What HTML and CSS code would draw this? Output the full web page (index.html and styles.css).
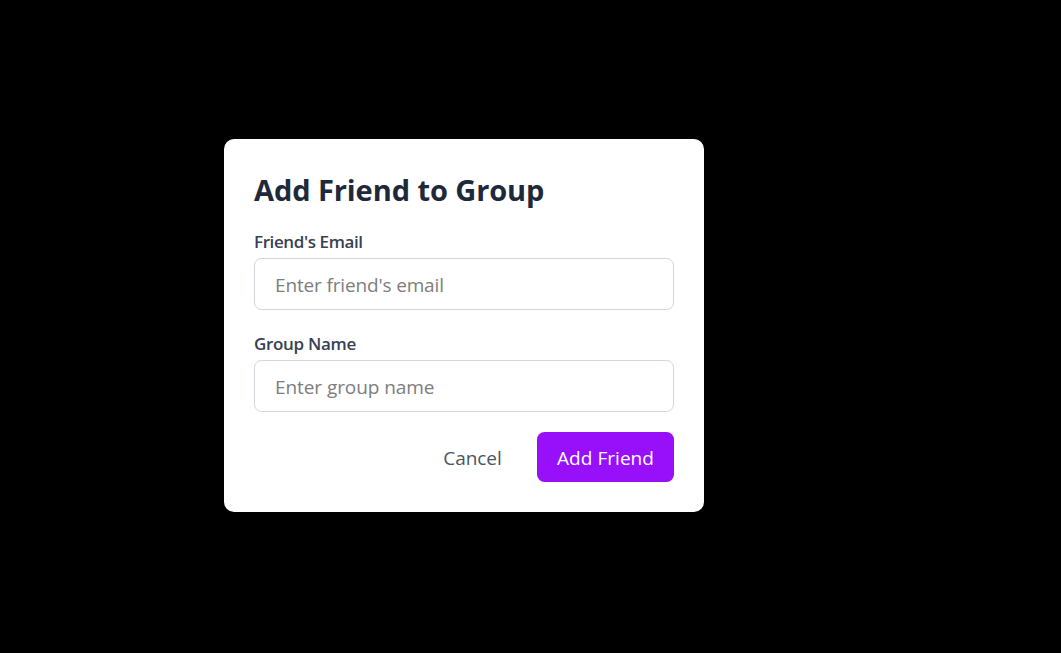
FILE: index.html
```html
<!DOCTYPE html>
<html lang="en">
<head>
<meta charset="utf-8">
<title>Add Friend to Group</title>
<link rel="stylesheet" href="styles.css">
</head>
<body>
<main class="overlay">
<form class="modal">
<h2 class="title">Add Friend to Group</h2>
<div class="field field-email">
<label class="label label-email" for="email">Friend's Email</label>
<input class="input input-email" id="email" type="text" placeholder="Enter friend's email">
</div>
<div class="field">
<label class="label" for="group">Group Name</label>
<input class="input" id="group" type="text" placeholder="Enter group name">
</div>
<div class="actions">
<button class="button cancel" type="button">Cancel</button>
<button class="button submit" type="button">Add Friend</button>
</div>
</form>
</main>
</body>
</html>
```
FILE: styles.css
```css
* { box-sizing: border-box; }
body { margin: 0; background: #000; font-family: "Open Sans", "Noto Sans", sans-serif; }
.overlay { display: flex; height: 653px; padding: 139px 0 0 224px; align-items: flex-start; overflow: hidden; }
.modal { width: 480px; height: 373px; padding: 30px; background: #fff; border-radius: 10px; }
.title { margin: 0; height: 60px; padding-top: 1px; font-size: 29px; line-height: 40px; letter-spacing: -0.08px; font-weight: 700; color: #1e2939; white-space: nowrap; }
.field { margin-bottom: 20px; }
.field-email { margin-bottom: 21px; }
.label { display: block; height: 25px; margin-bottom: 4px; font-size: 17px; line-height: 25px; letter-spacing: -0.31px; font-weight: 600; color: #364153; white-space: nowrap; }
.label-email { letter-spacing: -0.39px; }
.input { display: block; width: 420px; height: 52px; padding: 1px 20px 0; border: 1px solid #d1d5dc; border-radius: 7.5px; background: #fff; font: 400 19px/30px "Open Sans", "Noto Sans", sans-serif; letter-spacing: -0.07px; outline: none; }
.input-email { letter-spacing: -0.15px; }
.input::placeholder { color: #7d7d7d; opacity: 1; }
.actions { display: flex; justify-content: flex-end; gap: 15px; }
.button { height: 50px; padding: 2px 0 0; border: 0; border-radius: 7.5px; font: 400 19px/30px "Open Sans", "Noto Sans", sans-serif; white-space: nowrap; }
.cancel { width: 99px; background: transparent; color: #4a5565; letter-spacing: -0.08px; }
.submit { width: 137px; background: #980ffa; color: #fff; letter-spacing: 0.05px; }
```
